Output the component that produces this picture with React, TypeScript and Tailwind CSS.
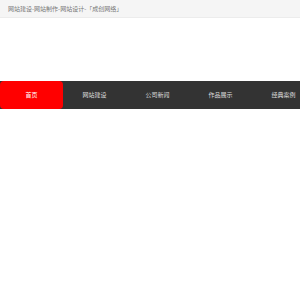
const navItems = ["首页", "网站建设", "公司新闻", "作品展示", "经典案例"];

export default function App() {
  return (
    <div
      className="w-[300px] h-[300px] bg-white overflow-hidden"
      style={{ fontFamily: '"Noto Sans CJK SC", sans-serif' }}
    >
      {/* top title strip */}
      <div className="h-[18px] bg-[#f5f5f5] border-b border-[#ececec] flex items-center pl-[8px]">
        <span className="text-[6px] leading-none text-[#777] whitespace-nowrap">
          网站建设-网站制作-网站设计-「成创网络」
        </span>
      </div>

      {/* main navigation */}
      <div className="mt-[63px] h-[28px] bg-[#333333] flex">
        {navItems.map((item, i) => (
          <div
            key={item}
            className={`w-[63px] shrink-0 flex items-center justify-center text-[6px] leading-none whitespace-nowrap ${
              i === 0 ? "bg-[#ff0000] rounded-[4px] text-white" : "text-[#dddddd]"
            }`}
          >
            {item}
          </div>
        ))}
      </div>
    </div>
  );
}
